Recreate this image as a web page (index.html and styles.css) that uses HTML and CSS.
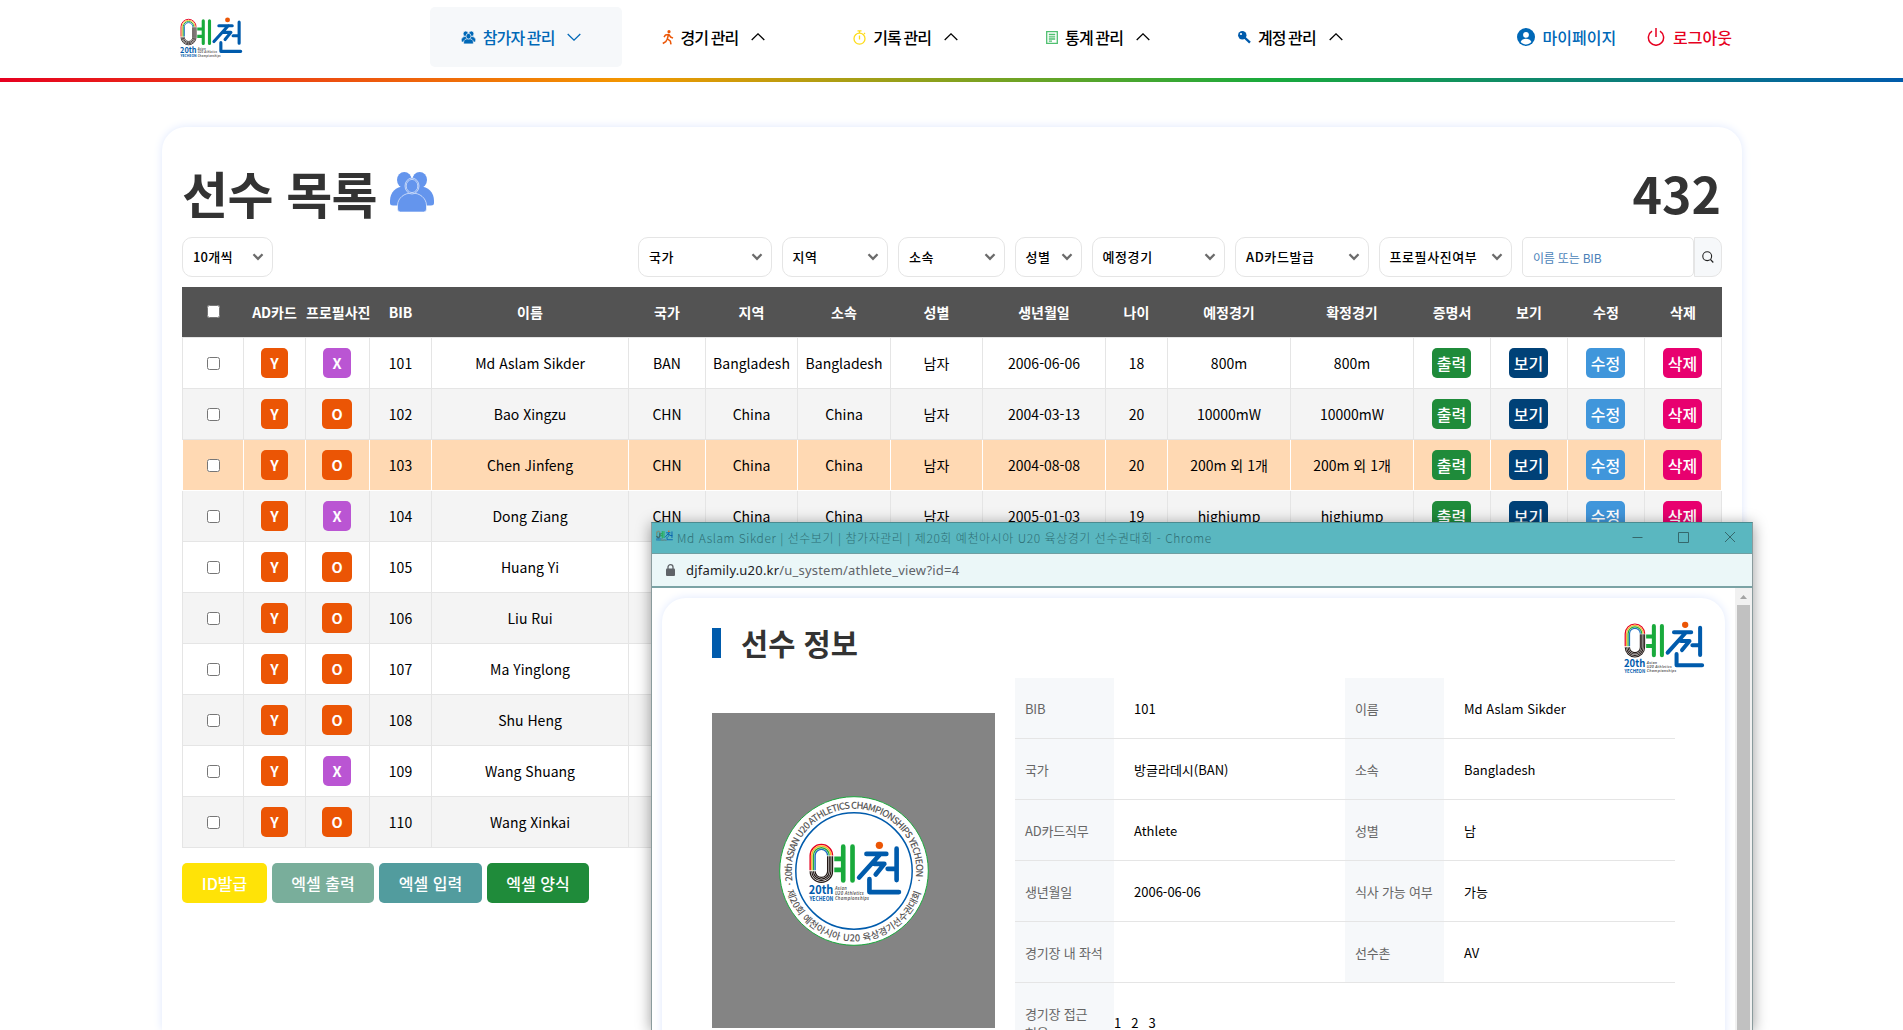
FILE: index.html
```html
<!DOCTYPE html>
<html lang="ko">
<head>
<meta charset="utf-8">
<title>선수 목록 | 참가자관리</title>
<link rel="stylesheet" href="styles.css">
</head>
<body>
<svg class="defs" width="0" height="0">
  <symbol id="logo" viewBox="146 182 282 184" overflow="visible">
    <g fill="none" stroke-width="4.2">
      <path stroke="#e60020" d="M150.200 270V226A33.800 33.800 0 0 1 217.800 226"/>
      <path stroke="#f8b62d" d="M155.200 270V226A28.800 28.800 0 0 1 212.800 226"/>
      <path stroke="#22ac38" d="M160.200 270V226A23.800 23.800 0 0 1 207.800 226"/>
      <path stroke="#1d6fc0" d="M165.200 270V226A18.800 18.800 0 0 1 202.800 226"/>
      <g stroke="#231815" stroke-width="3.600">
        <path d="M150.200 273A33.800 33.800 0 0 0 217.800 273V228"/>
        <path d="M155.200 273A28.800 28.800 0 0 0 212.800 273V228"/>
        <path d="M160.200 273A23.800 23.800 0 0 0 207.800 273V228"/>
        <path d="M165.200 273A18.800 18.800 0 0 0 202.800 273V228"/>
      </g>
    </g>
    <g fill="none" stroke-linecap="round" stroke-linejoin="round" stroke-width="14">
      <path stroke="#19aa3c" d="M250 199V301M278 199V301"/>
      <path stroke="#19aa3c" stroke-linecap="butt" d="M223 236H250M223 269H250"/>
      <path stroke="#005bac" d="M320 221H380M362 221L298 292M344 251H374L348 283M411 205V300M384 266H411M329 297V336H418"/>
    </g>
    <circle cx="359" cy="195" r="11" fill="#eb5505"/>
    <g fill="#005bac" font-family="Noto Sans CJK KR" font-weight="700">
      <text x="146" y="343" font-size="36" textLength="74" lengthAdjust="spacingAndGlyphs">20th</text>
      <text x="148" y="362" font-size="18" textLength="72" lengthAdjust="spacingAndGlyphs">YECHEON</text>
    </g>
    <g fill="#595757" font-family="Noto Sans" font-style="italic" font-weight="600" font-size="13">
      <text x="225" y="330" textLength="36">Asian</text>
      <text x="225" y="345" textLength="87">U20 Athletics</text>
      <text x="225" y="360" textLength="103">Championships</text>
    </g>
  </symbol>
  <symbol id="users" viewBox="0 0 44 40">
    <g fill="currentColor" stroke="#fff" stroke-opacity=".75" stroke-width=".8">
      <g stroke="none">
        <ellipse cx="14.300" cy="8" rx="7.300" ry="8"/><ellipse cx="29.700" cy="8" rx="7.300" ry="8"/>
        <path d="M0 29C0 20 6 14.500 14 14.500H30C38 14.500 44 20 44 29V31Q44 33.500 41 33.500H3Q0 33.500 0 31Z"/>
      </g>
      <path d="M7.500 37V33C8 26 14 21 22 21S36 26 36.500 33V37Q36.500 40 33.500 40H10.500Q7.500 40 7.500 37Z"/>
      <ellipse cx="22" cy="14" rx="7" ry="8"/><ellipse cx="22" cy="14" rx="5.800" ry="6.600"/>
    </g>
  </symbol>
  <symbol id="users-small" viewBox="0 0 15 13">
    <g fill="currentColor" stroke="#f6f8fa" stroke-width=".7">
      <ellipse cx="4.700" cy="2.800" rx="2.600" ry="2.800"/><ellipse cx="10.300" cy="2.800" rx="2.600" ry="2.800"/>
      <path d="M.3 10V8.500Q.6 5.500 4.500 5.300H10.500Q14.400 5.500 14.700 8.500V10Q14.700 11 13.700 11H1.300Q.3 11 .3 10Z"/>
      <path d="M2.600 12V11Q3 7.700 7.500 7.700T12.400 11V12Q12.400 12.900 11.500 12.900H3.500Q2.600 12.900 2.600 12Z"/>
      <ellipse cx="7.500" cy="5.200" rx="2.500" ry="2.800"/>
    </g>
  </symbol>
  <symbol id="up" viewBox="0 0 14 8"><path d="M.7 7L7 .9L13.300 7" fill="none" stroke="currentColor" stroke-width="1.300"/></symbol>
  <symbol id="down" viewBox="0 0 14 8"><path d="M.7 1L7 7.100L13.300 1" fill="none" stroke="currentColor" stroke-width="1.300"/></symbol>
  <symbol id="caret" viewBox="0 0 12 8"><path d="M1.500 1.300L6 5.800L10.500 1.300" fill="none" stroke="#6b6b6b" stroke-width="2.300"/></symbol>
</svg>

<header class="top">
  <svg class="top-logo"><use href="#logo"/></svg>
  <nav class="nav">
    <a class="nav-item active"><svg class="ico" width="15" height="13"><use href="#users-small"/></svg><span>참가자 관리</span><svg class="chev"><use href="#down"/></svg></a>
    <a class="nav-item"><svg class="ico" width="12" height="15" viewBox="0 0 12 15"><circle cx="7" cy="1.700" r="1.600" fill="#eb5505"/><path d="M2 7.200L3.500 5L6.800 4.400L8.600 7L11 8.200M6.500 4.800L5.300 8.800L8.300 11L9 14.400M5 9.500L3.800 11.600L.8 13.500" fill="none" stroke="#eb5505" stroke-width="1.500" stroke-linejoin="round"/></svg><span>경기 관리</span><svg class="chev"><use href="#up"/></svg></a>
    <a class="nav-item"><svg class="ico" width="13" height="15" viewBox="0 0 13 15"><g fill="none" stroke="#fddc1c" stroke-width="1.300"><circle cx="6.500" cy="8.700" r="5.500"/><path d="M4.500 .8H8.500M6.500 .8V3M6.500 5.500V9.500M11 3L12 4"/></g></svg><span>기록 관리</span><svg class="chev"><use href="#up"/></svg></a>
    <a class="nav-item"><svg class="ico" width="12" height="13" viewBox="0 0 12 13"><path d="M.7.7H11.300V12.300H.7ZM2.800 3.500H9.200M2.800 5.800H9.200M2.800 8H9.200M2.800 10.200H6" fill="none" stroke="#4fc070" stroke-width="1.300"/></svg><span>통계 관리</span><svg class="chev"><use href="#up"/></svg></a>
    <a class="nav-item"><svg class="ico" width="13" height="13" viewBox="0 0 13 13"><path d="M6 6L12 11.700" stroke="#005bac" stroke-width="2.400"/><circle cx="4.300" cy="4.300" r="4.200" fill="#005bac"/><circle cx="3" cy="3" r="1.100" fill="#fff"/></svg><span>계정 관리</span><svg class="chev"><use href="#up"/></svg></a>
  </nav>
  <div class="account">
    <a class="mypage"><svg width="18" height="18" viewBox="0 0 18 18"><circle cx="9" cy="9" r="9" fill="#0068b7"/><circle cx="9" cy="6.800" r="2.900" fill="#fff"/><path d="M3.600 14C4.500 11.600 6.500 10.800 9 10.800S13.500 11.600 14.400 14C13 15.600 11 16.400 9 16.400S5 15.600 3.600 14Z" fill="#fff"/></svg>마이페이지</a>
    <a class="logout"><svg width="18" height="18" viewBox="0 0 18 18"><path d="M5 3.200A7.600 7.600 0 1 0 13 3.200M9 0V9" fill="none" stroke="#e60020" stroke-width="1.500"/></svg>로그아웃</a>
  </div>
</header>

<main class="card">
  <div class="heading">
    <h1>선수 목록</h1>
    <svg class="heading-icon"><use href="#users"/></svg>
    <strong class="total">432</strong>
  </div>
  <div class="filters">
    <button class="pick w-count">10개씩<svg><use href="#caret"/></svg></button>
    <button class="pick w-l">국가<svg><use href="#caret"/></svg></button>
    <button class="pick w-m">지역<svg><use href="#caret"/></svg></button>
    <button class="pick w-m">소속<svg><use href="#caret"/></svg></button>
    <button class="pick w-s">성별<svg><use href="#caret"/></svg></button>
    <button class="pick w-l">예정경기<svg><use href="#caret"/></svg></button>
    <button class="pick w-l">AD카드발급<svg><use href="#caret"/></svg></button>
    <button class="pick w-l">프로필사진여부<svg><use href="#caret"/></svg></button>
    <div class="search">
      <input type="text" placeholder="이름 또는 BIB">
      <button class="search-btn"><svg width="12" height="12" viewBox="0 0 12 12"><circle cx="5.200" cy="5.200" r="4.400" fill="none" stroke="#222" stroke-width="1.100"/><path d="M8.500 8.500L11.300 11.500" stroke="#222" stroke-width="1.100"/></svg></button>
    </div>
  </div>
  <table class="list">
    <colgroup><col class="c62"><col class="c62"><col class="c64"><col class="c62"><col class="c197"><col class="c77"><col class="c92"><col class="c93"><col class="c92"><col class="c123"><col class="c62"><col class="c123"><col class="c123"><col class="c77"><col class="c77"><col class="c77"><col class="c77"></colgroup>
    <thead><tr><th><input type="checkbox"></th><th>AD카드</th><th>프로필사진</th><th>BIB</th><th>이름</th><th>국가</th><th>지역</th><th>소속</th><th>성별</th><th>생년월일</th><th>나이</th><th>예정경기</th><th>확정경기</th><th>증명서</th><th>보기</th><th>수정</th><th>삭제</th></tr></thead>
    <tbody id="athletes"></tbody>
  </table>
  <div class="actions">
    <button class="act yellow">ID발급</button>
    <button class="act sage">엑셀 출력</button>
    <button class="act teal">엑셀 입력</button>
    <button class="act green">엑셀 양식</button>
  </div>
</main>

<section class="window">
  <div class="titlebar">
    <svg class="favicon"><use href="#logo"/></svg>
    <span class="window-title">Md Aslam Sikder | 선수보기 | 참가자관리 | 제20회 예천아시아 U20 육상경기 선수권대회 - Chrome</span>
    <svg class="controls" width="104" height="12" viewBox="0 0 104 12"><path d="M.5 6.500H10.500M46.500 1.500H56.500V11.500H46.500ZM93 1L103 11M103 1L93 11" fill="none" stroke="#35686c" stroke-width="1"/></svg>
  </div>
  <div class="address">
    <svg width="9" height="12" viewBox="0 0 9 12"><rect y="4.500" width="9" height="7.500" rx="1" fill="#5f6368"/><path d="M2 5V3A2.500 2.300 0 0 1 7 3V5" fill="none" stroke="#5f6368" stroke-width="1.300"/></svg>
    <span class="url"><b>djfamily.u20.kr</b>/u_system/athlete_view?id=4</span>
  </div>
  <div class="viewport">
    <div class="profile">
      <div class="profile-head"><h2>선수 정보</h2><svg class="profile-logo"><use href="#logo"/></svg></div>
      <div class="profile-body">
        <div class="photo">
          <svg width="150" height="150" viewBox="0 0 150 150">
            <circle cx="75" cy="75" r="74.300" fill="#fff" stroke="#19aa3c"/>
            <circle cx="75" cy="75" r="58.200" fill="#fff" stroke="#005bac" stroke-width="1.500"/>
            <path id="arcTop" d="M14.800 90.500A62.200 62.200 0 1 1 135.200 90.500" fill="none"/>
            <path id="arcBottom" d="M7 93A70.300 70.300 0 0 0 143 93" fill="none"/>
            <g fill="#595757" font-family="Noto Sans CJK KR">
              <text font-size="9.400" font-weight="500"><textPath href="#arcTop" startOffset="2" textLength="219">· 20th ASIAN U20 ATHLETICS CHAMPIONSHIPS YECHEON ·</textPath></text>
              <text font-size="9.400" font-weight="500"><textPath href="#arcBottom" startOffset="2" textLength="179">제20회 예천아시아 U20 육상경기선수권대회</textPath></text>
            </g>
            <use href="#logo" x="29" y="45" width="95" height="61"/>
          </svg>
        </div>
        <dl class="info">
          <dt>BIB</dt><dd>101</dd><dt>이름</dt><dd>Md Aslam Sikder</dd>
          <dt>국가</dt><dd>방글라데시(BAN)</dd><dt>소속</dt><dd>Bangladesh</dd>
          <dt>AD카드직무</dt><dd>Athlete</dd><dt>성별</dt><dd>남</dd>
          <dt>생년월일</dt><dd>2006-06-06</dd><dt>식사 가능 여부</dt><dd>가능</dd>
          <dt>경기장 내 좌석</dt><dd></dd><dt>선수촌</dt><dd>AV</dd>
          <dt class="access">경기장 접근 허용</dt><dd class="zones"><span>1</span><span>2</span><span>3</span></dd>
        </dl>
      </div>
    </div>
    <div class="scroll"><svg width="17" height="17" viewBox="0 0 17 17"><path d="M5 11L8.500 7L12 11Z" fill="#a3a3a3"/></svg><div class="thumb"></div></div>
  </div>
</section>
<script src="app.js"></script>
</body>
</html>
```
FILE: styles.css
```css
* { box-sizing: border-box; }
body { margin: 0; height: 1030px; overflow: hidden; position: relative; background: #fff; color: #000; font-family: "Noto Sans CJK KR", "Noto Sans", sans-serif; font-size: 14px; }
button, input { font-family: inherit; }
h1, h2, dl, dd { margin: 0; }
.defs { position: absolute; }

.top { height: 82px; padding: 7px 171px 0 180px; display: flex; align-items: flex-start; border-bottom: 4px solid; border-image: linear-gradient(90deg, #e60020, #f39800 33.300%, #19aa3c 66.600%, #005bac) 1; }
.top-logo { width: 63px; height: 41px; margin: 10px 187px 0 0; }
.nav { display: flex; }
.nav-item { width: 192.300px; height: 60px; padding-right: 10px; display: flex; align-items: center; justify-content: center; border-radius: 5px; font-size: 16px; font-weight: 500; letter-spacing: -.9px; word-spacing: -1px; white-space: nowrap; }
.nav-item.active { background: #f6f8fa; color: #0068b7; }
.nav-item .ico { margin-right: 7px; }
.chev { width: 14px; height: 8px; margin-left: 13px; }
.account { margin-left: auto; display: flex; height: 60px; align-items: center; font-size: 16px; font-weight: 500; white-space: nowrap; }
.account a { display: flex; align-items: center; gap: 8px; }
.mypage { color: #0068b7; margin-right: 31px; }
.logout { color: #e60020; }

.card { width: 1580px; height: 903px; margin: 45px 0 0 162px; padding: 28px 20px 0; border-radius: 24px 24px 0 0; box-shadow: 0 0 10px #dfe8fd; }
.heading { height: 78px; display: flex; align-items: center; color: #333; }
.heading h1 { font-size: 50px; font-weight: 700; line-height: 74px; letter-spacing: -.6px; padding-bottom: 4px; }
.heading-icon { width: 44px; height: 40px; margin: 0 0 4px 13px; color: #6495ed; }
.total { margin-left: auto; font-size: 50px; line-height: 74px; padding: 0 1px 4px 0; }
.filters { display: flex; gap: 10px; margin-top: 4px; }
.pick { height: 40px; padding: 0 8px 2px 10px; border: 1px solid #e5e5e5; border-radius: 10px; background: #fff; display: flex; align-items: center; justify-content: space-between; font-size: 13px; font-weight: 500; color: #000; letter-spacing: .6px; white-space: nowrap; }
.pick svg { width: 12px; height: 8px; flex: none; margin-top: 1px; }
.w-count { width: 91px; margin-right: auto; letter-spacing: .2px; }
.w-l { width: 133.500px; } .w-m { width: 106.500px; } .w-s { width: 67px; }
.search { display: flex; width: 200px; height: 40px; }
.search input { width: 172px; padding: 0 10px; border: 1px solid #e5e5e5; border-radius: 5px; font-size: 12px; outline: 0; letter-spacing: -.2px; }
.search input::placeholder { color: #4a7fb8; }
.search-btn { width: 28px; padding: 0; border: 1px solid #e5e5e5; border-radius: 0 10px 10px 0; background: #f6f8fa; display: flex; align-items: center; justify-content: center; }

.list { width: 1540px; margin-top: 10px; table-layout: fixed; border-collapse: separate; border-spacing: 0; text-align: center; }
.c62 { width: 62px; } .c64 { width: 64px; } .c197 { width: 197px; } .c77 { width: 77px; } .c92 { width: 92px; } .c93 { width: 93px; } .c123 { width: 123px; }
.list th { height: 50px; padding: 0 1px 0 0; background: #535353; color: #fff; font-size: 14px; font-weight: 700; white-space: nowrap; }
.list th:first-child { padding-right: 0; }
.list td { height: 51px; padding: 0; border: solid #e5e5e5; border-width: 0 1px 1px 0; white-space: nowrap; }
.list td:first-child { border-left-width: 1px; }
.list td:nth-child(3), .list td:nth-child(n+14) { padding-right: 1px; }
.list tr:first-child td { border-top-width: 1px; height: 52px; }
.list tr:nth-child(even) td { background: #f4f4f4; }
.list tr.hover td { background: #ffd9b3; border-color: #fff; }
.list input { display: block; width: 13px; height: 13px; margin: 0 auto; }
.list th input { margin-bottom: 2px; }
.tag { display: inline-block; height: 30px; line-height: 30px; border-radius: 5px; color: #fff; font-size: 14.500px; font-weight: 600; vertical-align: middle; }
.tag.y { width: 27px; background: #eb5505; }
.tag.o { width: 30px; background: #eb5505; }
.tag.x { width: 28px; background: #ba55d3; }
.tag.cmd { width: 39px; font-size: 16px; font-weight: 500; }
.tag.print { background: #1f8b3a; } .tag.view { background: #004177; } .tag.edit { background: #4096db; } .tag.del { background: #e8006f; }
.actions { display: flex; gap: 5px; margin-top: 15px; }
.act { height: 40px; padding: 0; border: 0; border-radius: 5px; color: #fff; font-size: 16px; font-weight: 500; width: 102px; }
.yellow { width: 85px; background: #ffe307; } .sage { background: #79ae9b; } .teal { width: 103px; background: #529c9e; } .green { background: #1f8b3a; }

.window { position: absolute; left: 651px; top: 522px; width: 1102px; height: 508px; border: 1px solid #8a9b9d; border-top-color: #4b8b90; border-bottom: 0; background: #fff; box-shadow: 0 2px 14px rgba(0,0,0,.4); }
.titlebar { height: 31px; display: flex; align-items: center; background: #5ab7c0; border-bottom: 1px solid #6f9fa2; padding: 0 16px 0 4px; }
.favicon { width: 17px; height: 12px; margin: 0 4px 4px 0; }
.window-title { color: #2f6f75; font-size: 12px; font-weight: 300; letter-spacing: .55px; margin-bottom: 2px; white-space: nowrap; }
.controls { margin: 0 0 3px auto; }
.address { height: 34px; display: flex; align-items: center; gap: 11px; padding-left: 14px; background: #ebf7f8; border-bottom: 2px solid #7ba3a5; }
.url { color: #5f6368; font-family: "Noto Sans", sans-serif; font-size: 13px; letter-spacing: .2px; white-space: nowrap; }
.url b { color: #202124; font-weight: 400; }
.viewport { display: flex; height: 442px; overflow: hidden; }
.profile { width: 1063px; height: 500px; flex: none; margin: 10px 10px 0 10px; padding: 24px 20px 0 50px; border-radius: 24px; box-shadow: 0 0 10px #dfe8fd; }
.profile-head { display: flex; justify-content: space-between; height: 56px; }
.profile-head h2 { display: flex; align-items: center; height: 39px; font-size: 29.500px; font-weight: 700; color: #333; }
.profile-head h2::before { content: ""; width: 9px; height: 30px; margin: 2px 20px 0 0; background: #005bac; }
.profile-logo { width: 81px; height: 53px; margin-top: -1px; }
.profile-body { display: flex; gap: 20px; }
.photo { width: 283px; height: 315px; margin-top: 35px; background: #848484; display: flex; align-items: center; justify-content: center; }
.info { display: grid; grid-template-columns: 99px 231px 99px 231px; grid-template-rows: repeat(5, 61px) 80px; width: 660px; font-size: 13px; line-height: 19px; word-break: keep-all; }
.info dt, .info dd { display: flex; align-items: center; border-bottom: 1px solid #e5e5e5; }
.info dt { background: #f6f8fa; color: #666; padding: 0 10px; letter-spacing: -.2px; }
.info dt.access { padding-right: 20px; }
.info dd { padding-left: 20px; }
.info dd.zones { grid-column: span 3; padding-left: 0; gap: 10px; }
.scroll { width: 17px; margin-left: auto; background: #f1f1f1; }
.scroll svg { display: block; }
.thumb { width: 13px; height: 430px; margin-left: 2px; background: #c1c1c1; }
```
FILE: app.js
```js
const athletes = [
  [101, "X", "Md Aslam Sikder", "BAN", "Bangladesh", "2006-06-06", 18, "800m"],
  [102, "O", "Bao Xingzu", "CHN", "China", "2004-03-13", 20, "10000mW"],
  [103, "O", "Chen Jinfeng", "CHN", "China", "2004-08-08", 20, "200m 외 1개"],
  [104, "X", "Dong Ziang", "CHN", "China", "2005-01-03", 19, "highjump"],
  [105, "O", "Huang Yi"],
  [106, "O", "Liu Rui"],
  [107, "O", "Ma Yinglong"],
  [108, "O", "Shu Heng"],
  [109, "X", "Wang Shuang"],
  [110, "O", "Wang Xinkai"]
];
const commands = [["print", "출력"], ["view", "보기"], ["edit", "수정"], ["del", "삭제"]];

document.getElementById("athletes").innerHTML = athletes.map(
  ([bib, photo, name, nation = "", region = "", birth = "", age = "", event = ""]) => {
    const cells = [
      '<input type="checkbox">',
      '<span class="tag y">Y</span>',
      `<span class="tag ${photo.toLowerCase()}">${photo}</span>`,
      bib, name, nation, region, region, nation && "남자", birth, age, event, event,
      ...commands.map(([kind, label]) => nation && `<span class="tag cmd ${kind}">${label}</span>`)
    ];
    return `<tr class="${bib === 103 ? "hover" : ""}">${cells.map(c => `<td>${c}</td>`).join("")}</tr>`;
  }
).join("");
```
